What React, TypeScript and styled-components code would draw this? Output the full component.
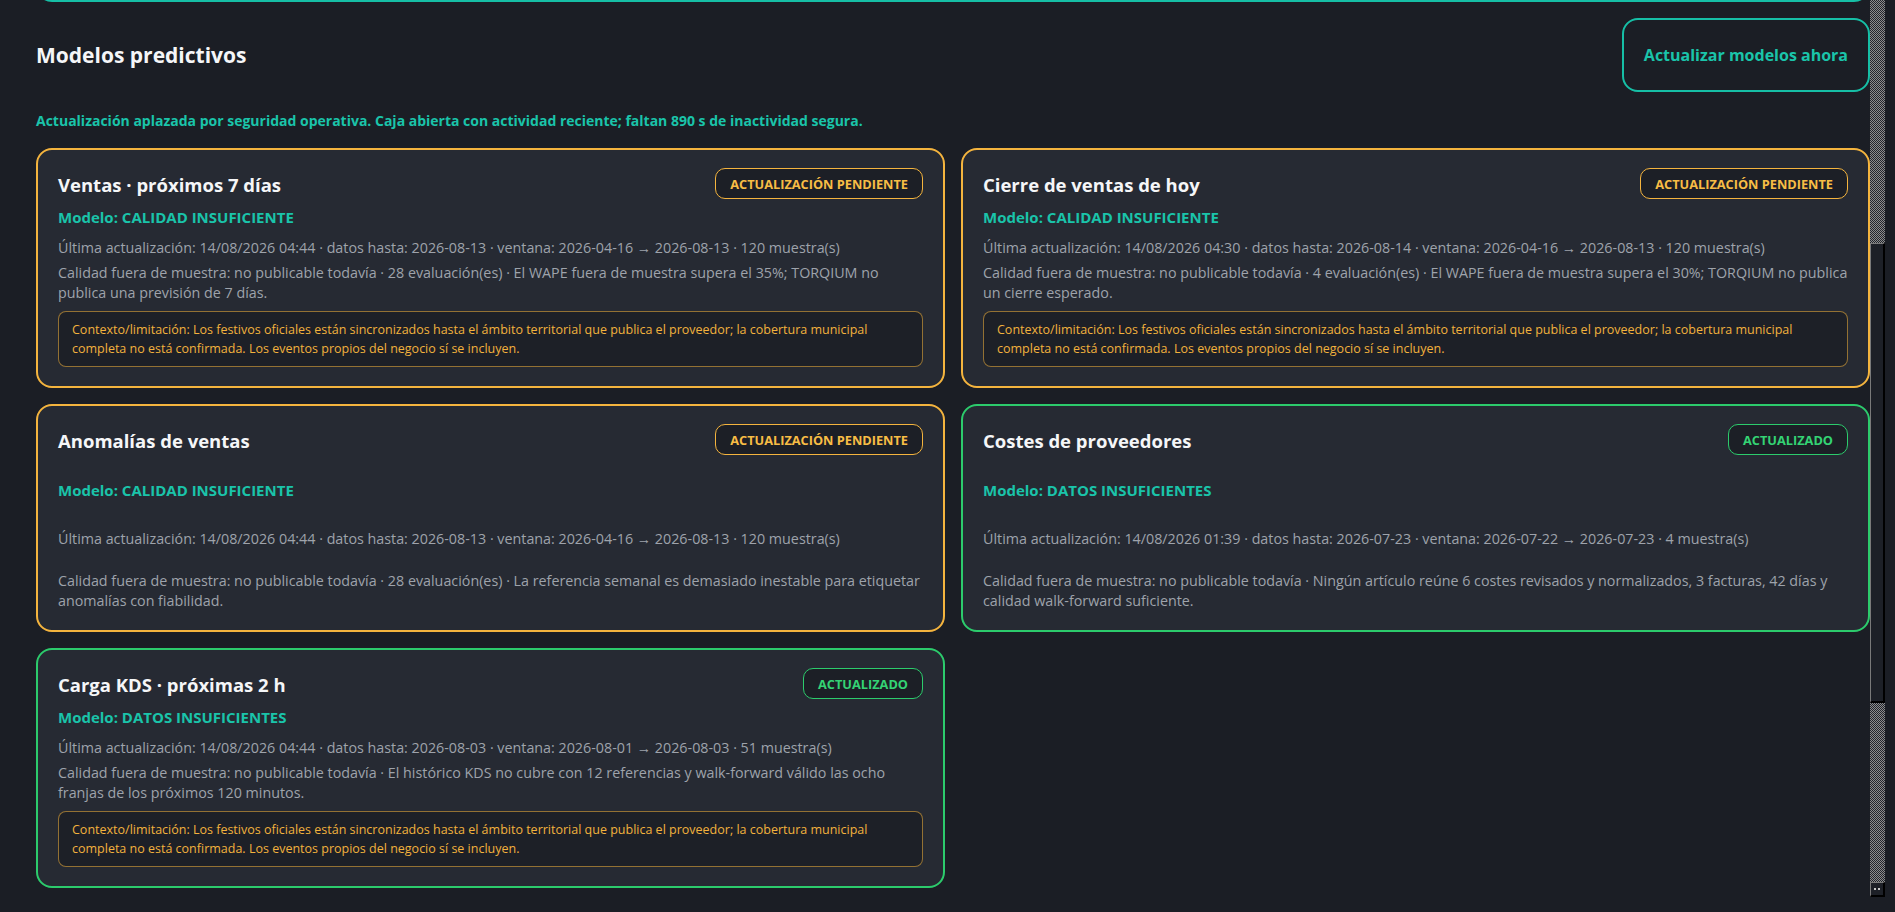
import { useLayoutEffect, useRef, useState } from "react";
import styled, { createGlobalStyle } from "styled-components";

type Tone = "warn" | "ok";

const tones: Record<Tone, { border: string; text: string }> = {
  warn: { border: "#f4b43e", text: "#f7bd45" },
  ok: { border: "#2ccb6c", text: "#34d374" },
};

const GlobalStyle = createGlobalStyle`
  * { box-sizing: border-box; }
  html, body {
    margin: 0;
    padding: 0;
    height: 100%;
    overflow: hidden;
    background: #1b1e25;
  }
  body {
    font-family: "Open Sans", "Segoe UI", "Noto Sans", sans-serif;
    color: #e5e7eb;
  }
`;

const Shell = styled.div`
  display: flex;
  height: 100vh;
  padding: 0 10px 15px 0;
`;

const Scroller = styled.main`
  position: relative;
  flex: 1;
  height: 100%;
  overflow-y: scroll;
  padding: 16px 0 359px 36px;
  scrollbar-width: none;

  &::-webkit-scrollbar {
    display: none;
  }
`;

// classic-looking scrollbar drawn beside the panel
const ScrollRail = styled.div`
  display: flex;
  flex-direction: column;
  width: 15px;
  height: 100%;
  background: repeating-conic-gradient(#8c8c8c 0 25%, #22252c 0 50%) 0 0 / 2px 2px;
`;

const RailPiece = styled.div`
  flex-shrink: 0;
  background: #1d2027;
  border-style: solid;
  border-width: 1px 2px 2px 1px;
  border-color: #7a7a7a #000 #000 #7a7a7a;
`;

const RailButton = styled(RailPiece)`
  display: flex;
  align-items: center;
  justify-content: center;
  gap: 2px;
  height: 15px;
  margin-top: auto;

  &::before,
  &::after {
    content: "";
    width: 2px;
    height: 2px;
    background: #c8c8c8;
  }
`;

const PrevPanel = styled.section`
  height: 460px;
  border: 2px solid #16bfa6;
  border-radius: 16px;
  background: #232730;
`;

const Section = styled.section`
  margin-top: 16px;
`;

const HeadRow = styled.div`
  display: flex;
  justify-content: space-between;
  align-items: center;
`;

const Title = styled.h2`
  margin: 0;
  font-size: 21px;
  line-height: 28px;
  font-weight: 700;
  color: #f5f6f8;
`;

const RefreshButton = styled.button`
  height: 74px;
  padding: 0 20px;
  border: 2px solid #16bfa6;
  border-radius: 16px;
  background: transparent;
  color: #1ac4aa;
  font-family: inherit;
  font-size: 16px;
  font-weight: 700;
  cursor: pointer;
`;

const Notice = styled.p`
  margin: 20px 0 0;
  font-size: 14px;
  line-height: 18px;
  font-weight: 700;
  color: #1ac4aa;
`;

const Grid = styled.div`
  display: grid;
  grid-template-columns: 1fr 1fr;
  gap: 16px;
  margin-top: 18px;
`;

const Card = styled.article<{ $tone: Tone }>`
  display: flex;
  flex-direction: column;
  justify-content: space-between;
  gap: 8px;
  min-height: 228px;
  padding: 18px 20px 19px;
  border: 2px solid ${({ $tone }) => tones[$tone].border};
  border-radius: 16px;
  background: #262a33;
`;

const CardHead = styled.div`
  display: flex;
  justify-content: space-between;
  align-items: center;
  gap: 16px;
`;

const CardTitle = styled.h3`
  margin: 0;
  padding-top: 2px;
  font-size: 18.5px;
  line-height: 24px;
  font-weight: 700;
  color: #f5f6f8;
`;

const Badge = styled.span<{ $tone: Tone }>`
  display: inline-flex;
  align-items: center;
  height: 31px;
  padding: 0 14px;
  border: 1px solid ${({ $tone }) => tones[$tone].border};
  border-radius: 10px;
  background: #1c1f26;
  color: ${({ $tone }) => tones[$tone].text};
  font-size: 12.75px;
  font-weight: 700;
  white-space: nowrap;
`;

const ModelLine = styled.div`
  font-size: 15px;
  line-height: 20px;
  font-weight: 700;
  color: #1ac4aa;
`;

const Muted = styled.p`
  margin: 0;
  font-size: 14.3px;
  line-height: 20px;
  color: #9ea3ab;
`;

const MetaLine = styled(Muted)`
  padding-top: 3px;
`;

const QualityText = styled(Muted)`
  margin-top: -3px;
`;

const Limitation = styled.div`
  padding: 8px 13px;
  border: 1px solid rgba(244, 180, 62, 0.55);
  border-radius: 8px;
  background: #1d2027;
  color: #f2b23d;
  font-size: 12.5px;
  line-height: 19px;
`;

const LIMIT =
  "Contexto/limitación: Los festivos oficiales están sincronizados hasta el ámbito territorial que publica el proveedor; la cobertura municipal completa no está confirmada. Los eventos propios del negocio sí se incluyen.";

type Model = {
  title: string;
  tone: Tone;
  status: string;
  meta: string;
  quality: string;
  limitation?: string;
};

const models: Model[] = [
  {
    title: "Ventas · próximos 7 días",
    tone: "warn",
    status: "CALIDAD INSUFICIENTE",
    meta: "Última actualización: 14/08/2026 04:44 · datos hasta: 2026-08-13 · ventana: 2026-04-16 → 2026-08-13 · 120 muestra(s)",
    quality:
      "Calidad fuera de muestra: no publicable todavía · 28 evaluación(es) · El WAPE fuera de muestra supera el 35%; TORQIUM no publica una previsión de 7 días.",
    limitation: LIMIT,
  },
  {
    title: "Cierre de ventas de hoy",
    tone: "warn",
    status: "CALIDAD INSUFICIENTE",
    meta: "Última actualización: 14/08/2026 04:30 · datos hasta: 2026-08-14 · ventana: 2026-04-16 → 2026-08-13 · 120 muestra(s)",
    quality:
      "Calidad fuera de muestra: no publicable todavía · 4 evaluación(es) · El WAPE fuera de muestra supera el 30%; TORQIUM no publica un cierre esperado.",
    limitation: LIMIT,
  },
  {
    title: "Anomalías de ventas",
    tone: "warn",
    status: "CALIDAD INSUFICIENTE",
    meta: "Última actualización: 14/08/2026 04:44 · datos hasta: 2026-08-13 · ventana: 2026-04-16 → 2026-08-13 · 120 muestra(s)",
    quality:
      "Calidad fuera de muestra: no publicable todavía · 28 evaluación(es) · La referencia semanal es demasiado inestable para etiquetar anomalías con fiabilidad.",
  },
  {
    title: "Costes de proveedores",
    tone: "ok",
    status: "DATOS INSUFICIENTES",
    meta: "Última actualización: 14/08/2026 01:39 · datos hasta: 2026-07-23 · ventana: 2026-07-22 → 2026-07-23 · 4 muestra(s)",
    quality:
      "Calidad fuera de muestra: no publicable todavía · Ningún artículo reúne 6 costes revisados y normalizados, 3 facturas, 42 días y calidad walk-forward suficiente.",
  },
  {
    title: "Carga KDS · próximas 2 h",
    tone: "ok",
    status: "DATOS INSUFICIENTES",
    meta: "Última actualización: 14/08/2026 04:44 · datos hasta: 2026-08-03 · ventana: 2026-08-01 → 2026-08-03 · 51 muestra(s)",
    quality:
      "Calidad fuera de muestra: no publicable todavía · El histórico KDS no cubre con 12 referencias y walk-forward válido las ocho franjas de los próximos 120 minutos.",
    limitation: LIMIT,
  },
];

function ModelCard({ m }: { m: Model }) {
  return (
    <Card $tone={m.tone}>
      <CardHead>
        <CardTitle>{m.title}</CardTitle>
        <Badge $tone={m.tone}>
          {m.tone === "warn" ? "ACTUALIZACIÓN PENDIENTE" : "ACTUALIZADO"}
        </Badge>
      </CardHead>
      <ModelLine>Modelo: {m.status}</ModelLine>
      <MetaLine>{m.meta}</MetaLine>
      <QualityText>{m.quality}</QualityText>
      {m.limitation && <Limitation>{m.limitation}</Limitation>}
    </Card>
  );
}

export default function App() {
  const scrollRef = useRef<HTMLElement>(null);
  const prevRef = useRef<HTMLElement>(null);
  const [thumb, setThumb] = useState({ top: 0, height: 0 });

  // scroll so the previous panel only shows its bottom edge, then size the thumb
  useLayoutEffect(() => {
    const el = scrollRef.current;
    const prev = prevRef.current;
    if (!el || !prev) return;
    el.scrollTop = prev.offsetTop + prev.offsetHeight - 2;
    const track = el.clientHeight - 15;
    const height = Math.round((track * el.clientHeight) / el.scrollHeight);
    const range = el.scrollHeight - el.clientHeight;
    const top = range > 0 ? Math.round(((track - height) * el.scrollTop) / range) : 0;
    setThumb({ top, height });
  }, []);

  return (
    <>
      <GlobalStyle />
      <Shell>
        <Scroller ref={scrollRef}>
          <PrevPanel ref={prevRef} />
          <Section>
            <HeadRow>
              <Title>Modelos predictivos</Title>
              <RefreshButton>Actualizar modelos ahora</RefreshButton>
            </HeadRow>
            <Notice>
              Actualización aplazada por seguridad operativa. Caja abierta con
              actividad reciente; faltan 890 s de inactividad segura.
            </Notice>
            <Grid>
              {models.map((m) => (
                <ModelCard key={m.title} m={m} />
              ))}
            </Grid>
          </Section>
        </Scroller>
        <ScrollRail>
          <RailPiece style={{ marginTop: thumb.top, height: thumb.height }} />
          <RailButton />
        </ScrollRail>
      </Shell>
    </>
  );
}
